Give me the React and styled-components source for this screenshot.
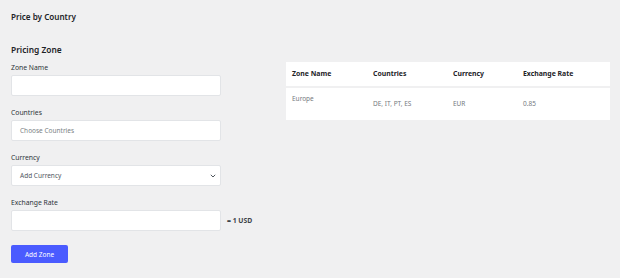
import React from 'react';
import styled, { createGlobalStyle } from 'styled-components';

const Global = createGlobalStyle`
  html, body {
    margin: 0;
    padding: 0;
    background: #f0f0f1;
  }
  body {
    font-family: 'Noto Sans', 'Open Sans', sans-serif;
    color: #3c434a;
  }
`;

const Page = styled.div`
  width: 620px;
  height: 278px;
  box-sizing: border-box;
  padding: 11px 10px 0 11px;
`;

const Title = styled.h1`
  margin: 0;
  font-size: 8.1px;
  line-height: 12px;
  font-weight: 600;
  color: #1d2327;
`;

const Columns = styled.div`
  display: grid;
  grid-template-columns: 275px 1fr;
  margin-top: 21px;
`;

const Heading = styled.h2`
  margin: 0 0 7px;
  font-size: 8.4px;
  line-height: 12px;
  font-weight: 600;
  color: #1d2327;
`;

const Field = styled.div`
  margin-bottom: ${p => p.$last ? '14px' : '12px'};
`;

const Label = styled.div`
  font-size: 6.8px;
  line-height: 10px;
  margin-bottom: 2px;
  color: #2c3338;
`;

const Row = styled.div`
  display: flex;
  align-items: center;
  gap: 6px;
`;

const Input = styled.div`
  width: 210px;
  height: 21px;
  box-sizing: border-box;
  background: #fff;
  border: 1px solid #e2e4e7;
  border-radius: 2px;
  display: flex;
  align-items: center;
  justify-content: space-between;
  padding: 0 4px 0 8px;
  font-size: 6.5px;
  color: ${p => p.$muted ? '#7a7f85' : '#50575e'};
`;

const Suffix = styled.span`
  font-size: 6.8px;
  font-weight: 700;
  color: #3c434a;
`;

const Button = styled.button`
  display: block;
  width: 57px;
  height: 18px;
  border: none;
  border-radius: 2px;
  background: #4a5bff;
  color: #fff;
  font-family: inherit;
  font-size: 6.5px;
  padding: 0;
  cursor: pointer;
`;

const Table = styled.div`
  margin-top: 18px;
  background: #fff;
  width: 324px;
`;

const TRow = styled.div`
  display: grid;
  grid-template-columns: 81px 80px 70px 1fr;
  padding-left: 6px;
  height: ${p => p.$head ? '24px' : '32px'};
  border-bottom: ${p => p.$head ? '2px solid #f0f0f1' : 'none'};
`;

const Cell = styled.div`
  display: flex;
  align-items: ${p => p.$top ? 'flex-start' : 'center'};
  padding-top: ${p => p.$top ? '6px' : '0'};
  font-size: ${p => p.$head ? '6.9px' : '6.5px'};
  font-weight: ${p => p.$head ? 700 : 400};
  color: ${p => p.$head ? '#1d2327' : '#757a80'};
  line-height: 10px;
`;

const Chevron = () => (
  <svg width="6" height="4" viewBox="0 0 6 4">
    <path d="M0.8 0.8 L3 3 L5.2 0.8" fill="none" stroke="#50575e" strokeWidth="1" />
  </svg>
);

export default function App() {
  return (
    <Page>
      <Global />
      <Title>Price by Country</Title>
      <Columns>
        <div>
          <Heading>Pricing Zone</Heading>
          <Field>
            <Label>Zone Name</Label>
            <Input />
          </Field>
          <Field>
            <Label>Countries</Label>
            <Input $muted>Choose Countries</Input>
          </Field>
          <Field>
            <Label>Currency</Label>
            <Input>Add Currency<Chevron /></Input>
          </Field>
          <Field $last>
            <Label>Exchange Rate</Label>
            <Row>
              <Input />
              <Suffix>= 1 USD</Suffix>
            </Row>
          </Field>
          <Button>Add Zone</Button>
        </div>
        <div>
          <Table>
            <TRow $head>
              <Cell $head>Zone Name</Cell>
              <Cell $head>Countries</Cell>
              <Cell $head>Currency</Cell>
              <Cell $head>Exchange Rate</Cell>
            </TRow>
            <TRow>
              <Cell $top>Europe</Cell>
              <Cell>DE, IT, PT, ES</Cell>
              <Cell>EUR</Cell>
              <Cell>0.85</Cell>
            </TRow>
          </Table>
        </div>
      </Columns>
    </Page>
  );
}
